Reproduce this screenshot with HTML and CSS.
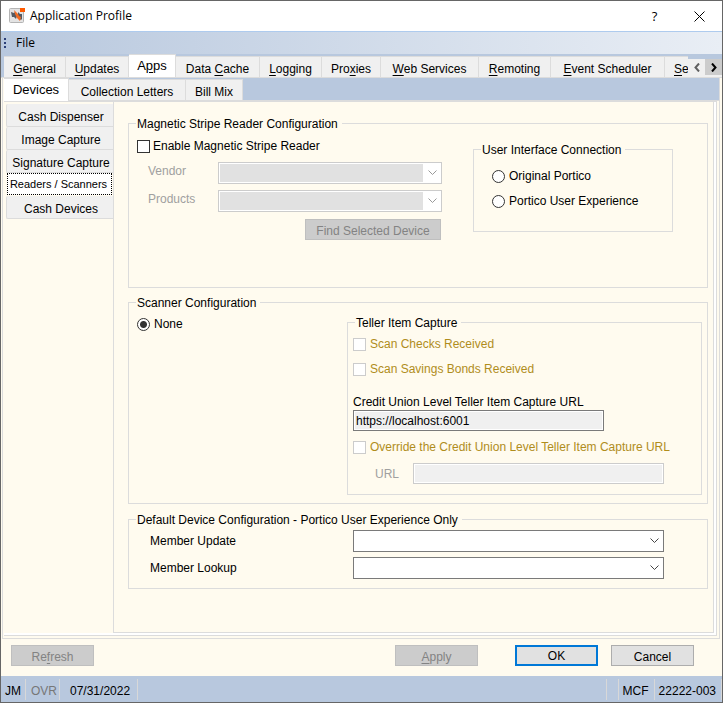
FILE: index.html
```html
<!DOCTYPE html>
<html lang="en">
<head>
<meta charset="utf-8">
<meta name="viewport" content="width=device-width, initial-scale=1">
<title>Application Profile</title>
<link rel="stylesheet" href="styles.css">
</head>
<body>
<main class="window">
  <header class="titlebar">
    <svg class="app-icon" viewBox="0 0 16 16" aria-hidden="true">
      <rect x="0.5" y="0.5" width="14" height="14" rx="1" fill="#e3e3e3" stroke="#b4b4b4"/>
      <path d="M2 4 5 5 6 4 8 8 7 11 5 9 3 9z" fill="#555a62"/>
      <path d="M9 4 11 6 13 6 13 11 12 12 9 10z" fill="#555a62"/>
      <path d="M5 2 9 6 10 8 12 9 11 13 8 10 7 8 6 6z" fill="#f26a21"/>
      <rect x="11" y="0" width="5" height="4" fill="#ff5a00"/>
    </svg>
    <h1 class="title">Application Profile</h1>
    <button class="title-btn help" type="button" aria-label="Help">?</button>
    <button class="title-btn" type="button" aria-label="Close">
      <svg viewBox="0 0 11 11" width="11" height="11"><path d="M.5.5l10 10M10.500.5l-10 10" stroke="#000" fill="none"/></svg>
    </button>
  </header>
  <nav class="menubar">
    <span class="grip" aria-hidden="true"></span>
    <button class="menu-item" type="button">File</button>
  </nav>
  <div class="tabs top-tabs" role="tablist">
    <button class="tab" type="button" role="tab"><u>G</u>eneral</button>
    <button class="tab" type="button" role="tab"><u>U</u>pdates</button>
    <button class="tab active" type="button" role="tab" aria-selected="true">A<u>p</u>ps</button>
    <button class="tab" type="button" role="tab">Data <u>C</u>ache</button>
    <button class="tab" type="button" role="tab"><u>L</u>ogging</button>
    <button class="tab" type="button" role="tab">Pro<u>x</u>ies</button>
    <button class="tab" type="button" role="tab"><u>W</u>eb Services</button>
    <button class="tab" type="button" role="tab"><u>R</u>emoting</button>
    <button class="tab" type="button" role="tab"><u>E</u>vent Scheduler</button>
    <button class="tab clipped" type="button" role="tab"><u>S</u>e</button>
    <div class="scroller">
      <button class="scroll-btn" type="button" aria-label="Scroll left"><svg viewBox="0 0 6 9" width="6" height="9"><path d="M5 .5 1.500 4.500 5 8.500" stroke="#606060" stroke-width="2" fill="none"/></svg></button>
      <button class="scroll-btn next" type="button" aria-label="Scroll right"><svg viewBox="0 0 6 9" width="6" height="9"><path d="M1 .5 4.500 4.500 1 8.500" stroke="#000" stroke-width="2" fill="none"/></svg></button>
    </div>
  </div>
  <div class="frame">
    <div class="tabs sub-tabs" role="tablist">
      <button class="tab active" type="button" role="tab" aria-selected="true">Devices</button>
      <button class="tab" type="button" role="tab">Collection Letters</button>
      <button class="tab" type="button" role="tab">Bill Mix</button>
    </div>
    <div class="body">
      <div class="side-tabs" role="tablist" aria-orientation="vertical">
        <button class="side-tab" type="button" role="tab">Cash Dispenser</button>
        <button class="side-tab" type="button" role="tab">Image Capture</button>
        <button class="side-tab" type="button" role="tab">Signature Capture</button>
        <button class="side-tab active" type="button" role="tab" aria-selected="true">Readers / Scanners</button>
        <button class="side-tab" type="button" role="tab">Cash Devices</button>
      </div>
      <section class="panel">
        <fieldset class="group reader">
          <legend>Magnetic Stripe Reader Configuration</legend>
          <div class="split">
            <div class="reader-form">
              <label class="check"><input type="checkbox">Enable Magnetic Stripe Reader</label>
              <div class="field"><label class="off" for="vendor">Vendor</label><select id="vendor" disabled></select></div>
              <div class="field"><label class="off" for="products">Products</label><select id="products" disabled></select></div>
              <button class="btn find" type="button" disabled>Find Selected Device</button>
            </div>
            <fieldset class="group connection">
              <legend>User Interface Connection</legend>
              <label class="check"><input type="radio" name="ui">Original Portico</label>
              <label class="check"><input type="radio" name="ui">Portico User Experience</label>
            </fieldset>
          </div>
        </fieldset>

        <fieldset class="group scanner">
          <legend>Scanner Configuration</legend>
          <label class="check none"><input type="radio" name="scanner" checked>None</label>
          <fieldset class="group teller">
            <legend>Teller Item Capture</legend>
            <label class="check gold"><input type="checkbox" disabled>Scan Checks Received</label>
            <label class="check gold"><input type="checkbox" disabled>Scan Savings Bonds Received</label>
            <label class="caption" for="cu-url">Credit Union Level Teller Item Capture URL</label>
            <input class="text" id="cu-url" type="text" value="https://localhost:6001" readonly>
            <label class="check gold override"><input type="checkbox" disabled>Override the Credit Union Level Teller Item Capture URL</label>
            <div class="url-row"><label class="off" for="url">URL</label><input class="text" id="url" type="text" disabled></div>
          </fieldset>
        </fieldset>

        <fieldset class="group defaults">
          <legend>Default Device Configuration - Portico User Experience Only</legend>
          <div class="field"><label for="update">Member Update</label><select id="update"></select></div>
          <div class="field"><label for="lookup">Member Lookup</label><select id="lookup"></select></div>
        </fieldset>
      </section>
    </div>
  </div>
  <div class="actions">
    <button class="btn refresh" type="button" disabled>Re<u>f</u>resh</button>
    <button class="btn apply" type="button" disabled><u>A</u>pply</button>
    <button class="btn primary" type="button">OK</button>
    <button class="btn" type="button">Cancel</button>
  </div>
  <footer class="status">
    <span class="cell">JM</span>
    <span class="cell ovr">OVR</span>
    <span class="cell date">07/31/2022</span>
    <span class="cell spacer"></span>
    <span class="cell blank"></span>
    <span class="cell org">MCF</span>
    <span class="cell org">22222-003</span>
  </footer>
</main>
</body>
</html>
```
FILE: styles.css
```css
:root {
  --cream: #fffbef;
  --blue: #b8c8de;
  --line: #dcdcdc;
  --face: #f0f0f0;
}

* { box-sizing: border-box; }

body {
  margin: 0;
  font: 12px/16px "Liberation Sans", Arial, sans-serif;
  color: #000;
}

button, input, select { font: inherit; color: inherit; margin: 0; }
button { border: 0; padding: 0; background: none; white-space: nowrap; }
u { text-underline-offset: 2px; }

.window {
  display: flex;
  flex-direction: column;
  min-height: 100vh;
  border: 1px solid #666;
  background: var(--cream);
}

/* Title and menu */
.titlebar {
  display: flex;
  align-items: center;
  height: 30px;
  padding-left: 8px;
  background: #fff;
}
.app-icon { width: 16px; height: 16px; }
.title {
  flex: 1;
  margin: 0 0 0 5px;
  font: 12px/16px "Open Sans", sans-serif;
}
.title-btn {
  display: grid;
  place-items: center;
  width: 45px;
  height: 29px;
}
.title-btn.help { font: 13px/16px "Open Sans", sans-serif; }

.menubar {
  display: flex;
  align-items: center;
  height: 23px;
  padding-left: 3px;
  border-top: 1px solid #aecbee;
  background: linear-gradient(90deg, #b8c8de, #e9eef5);
}
.grip {
  width: 2px;
  height: 10px;
  background: repeating-linear-gradient(#2b3f78 0 2px, transparent 2px 4px);
}
.menu-item { margin-left: 10px; font: 12px/16px "Open Sans", sans-serif; }

/* Tabs */
.tabs { display: grid; align-items: end; background: var(--blue); }
.tab {
  height: 21px;
  padding-top: 4px;
  border: 1px solid var(--line);
  border-width: 1px 1px 0 0;
  background: var(--face);
}
.tab.active { padding-top: 0; background: #fff; font-size: 13px; }

.top-tabs {
  position: relative;
  grid-template-columns: 62px 63px 47px 84px 62px 59px 98px 72px 114px 60px;
  height: 24px;
  padding-left: 3px;
  border-bottom: 1px solid var(--line);
  overflow: hidden;
}
.top-tabs .tab.active { height: 23px; }
.top-tabs .tab.clipped { padding-left: 9px; text-align: left; }
.scroller {
  position: absolute;
  right: 0;
  top: 0;
  display: flex;
  height: 23px;
  border-top: 5px solid var(--blue);
  background: var(--face);
}
.scroll-btn { display: grid; place-items: center; width: 17px; height: 16px; }
.scroll-btn.next { background: #ccc; }

.frame {
  flex: 1;
  display: flex;
  flex-direction: column;
  margin: 0 2px 0 1px;
  border: 1px solid var(--line);
  border-width: 0 1px 1px;
  padding: 0 0 2px 1px;
}
.sub-tabs {
  grid-template-columns: 65px 117px 57px;
  height: 23px;
  border-bottom: 1px solid var(--line);
}
.sub-tabs .tab.active { height: 23px; margin-bottom: -1px; }

.body {
  flex: 1;
  display: flex;
  margin-right: 2px;
  border: 1px solid var(--line);
  border-left-width: 0;
  padding: 0 2px 2px 0;
  box-shadow: inset -2px -2px #fff;
}
.side-tabs { display: flex; flex-direction: column; width: 109px; padding: 2px 0 0 2px; }
.side-tab {
  height: 23px;
  padding: 4px 0 0 2px;
  border: 1px solid var(--line);
  border-width: 0 0 1px 1px;
  border-radius: 2px 0 0 2px;
  background: var(--face);
}
.side-tab.active {
  height: 22px;
  margin: 0 1px 1px;
  padding: 0 2px 0 0;
  border: 1px dotted #000;
  border-radius: 0;
  background: #fff;
  font-size: 11px;
}

/* Groups */
.panel {
  flex: 1;
  min-width: 0;
  border: 1px solid var(--line);
  border-width: 0 1px 1px;
  padding: 12px 5px 43px 14px;
}
.group { min-width: 0; margin: 0; border: 1px solid var(--line); padding: 0 5px 0 8px; }
.group > legend { padding: 2px 4px 0 1px; }
.group legend { margin-left: -1px; }
.check { display: flex; align-items: center; gap: 3px; height: 16px; }
.check input {
  appearance: none;
  flex: none;
  width: 13px;
  height: 13px;
  border: 1px solid #333;
  background: #fff;
}
.check input[type="radio"] { border-radius: 50%; }
.check input[type="radio"]:checked {
  background: radial-gradient(circle, #333 0 3px, #fff 4px);
}
.check input:disabled { border-color: #ccc; }
.gold { color: #b08d1c; }
.off { color: #a0a0a0; }

select {
  appearance: none;
  height: 22px;
  border: 1px solid #7a7a7a;
  border-radius: 0;
  background: #fff url("data:image/svg+xml,%3Csvg xmlns='http://www.w3.org/2000/svg' width='9' height='6'%3E%3Cpath d='M.5 .5l4 4 4-4' fill='none' stroke='%23444'/%3E%3C/svg%3E") no-repeat right 4px center;
}
select:disabled {
  opacity: 1;
  border-color: #ccc;
  background:
    url("data:image/svg+xml,%3Csvg xmlns='http://www.w3.org/2000/svg' width='9' height='6'%3E%3Cpath d='M.5 .5l4 4 4-4' fill='none' stroke='%23999'/%3E%3C/svg%3E") no-repeat right 4px center,
    linear-gradient(#fff, #fff) no-repeat right / 18px 100%,
    #e1e1e1;
  box-shadow: inset 0 0 0 1px #fff;
}
.field { display: flex; }
.text {
  height: 21px;
  border: 1px solid #7a7a7a;
  padding: 1px 2px 0;
  background: var(--face);
  box-shadow: inset 0 0 0 1px #fff;
}
.text:disabled { border-color: #ccc; }

.reader { padding-bottom: 47px; }
.split { display: flex; align-items: flex-start; gap: 31px; padding-top: 6px; }
.reader-form { display: flex; flex-direction: column; width: 305px; }
.reader-form .field { margin-top: 6px; padding-left: 11px; }
.reader-form .check + .field { margin-top: 8px; }
.reader-form .field label { width: 70px; padding-top: 1px; }
.reader-form select { width: 224px; }
.connection { width: 200px; margin-top: 2px; padding: 1px 8px 22px 18px; }
.connection > legend { margin-left: -11px; }
.connection .check { gap: 4px; margin-top: 9px; }

.scanner { display: flex; margin-top: 5px; padding-bottom: 8px; }
.scanner .none { width: 210px; margin-top: 5px; gap: 4px; }
.teller { flex: 1; margin-top: 2px; padding: 5px 5px 10px; }
.teller > legend { margin-left: 2px; }
.teller .check { gap: 4px; }
.teller .check + .check { margin-top: 9px; }
.caption { display: block; margin-top: 17px; }
.teller > .text { display: block; width: 251px; }
.teller .override { margin-top: 8px; }
.url-row { display: flex; align-items: center; margin: 8px 0 0 22px; }
.url-row label { width: 38px; }
.url-row .text { width: 251px; }

.defaults { margin-top: 6px; padding: 2px 43px 9px 21px; }
.defaults > legend { margin-left: -14px; }
.defaults .field { align-items: center; }
.defaults .field + .field { margin-top: 5px; }
.defaults label { width: 203px; }
.defaults select { flex: 1; }

/* Buttons and status */
.btn {
  width: 83px;
  height: 21px;
  border: 1px solid #adadad;
  padding-top: 2px;
  background: #e1e1e1;
}
.btn:disabled { border-color: #bfbfbf; background: #ccc; color: #838383; }
.btn.find { align-self: flex-end; width: 136px; margin: 7px 1px 0 0; }
.btn.primary { border: 2px solid #0078d7; padding-top: 1px; }
.actions { display: flex; padding: 6px 28px 10px 10px; }
.btn.apply { margin-left: auto; }
.btn.primary { margin: 0 13px 0 37px; }

.status { display: flex; height: 26px; padding: 3px 0 2px; background: var(--blue); }
.cell { padding: 4px 4px 0 4px; border-right: 1px solid #d8d8d8; }
.ovr { padding-right: 2px; padding-left: 5px; color: #777; }
.date { padding: 4px 7px 0 10px; }
.org { padding-right: 5px; }
.spacer { flex: 1; }
.blank { width: 12px; }
```
